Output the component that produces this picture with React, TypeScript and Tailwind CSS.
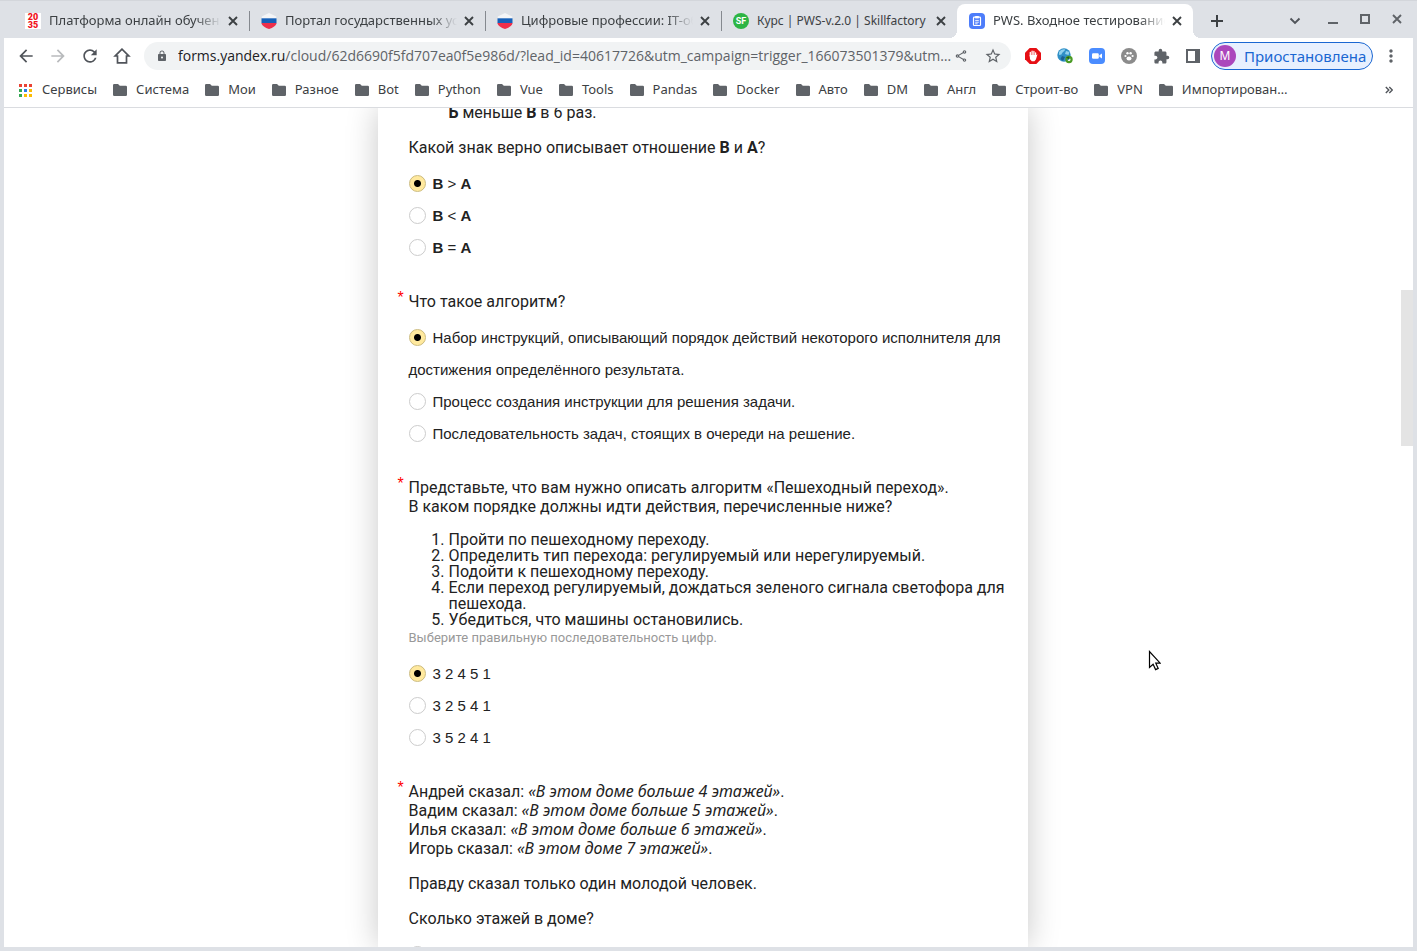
import React from "react";
import {
  MdArrowBack,
  MdArrowForward,
  MdExtension,
  MdLock,
  MdMoreVert,
  MdOutlineShare,
  MdRefresh,
  MdStarBorder,
} from "react-icons/md";

const RussiaIcon = () => (
  <svg viewBox="0 0 16 16" className="size-4">
    <path d="M8 0 15.2 3.6V6H.8V3.6z" fill="#f4f5f7" />
    <path d="M.5 5.3h15v5H.5z" fill="#1660b8" />
    <path d="M.5 10h15c-.4 3-3.500 4.600-7.500 6C4 14.600.9 13 .5 10z" fill="#ee2f4b" />
  </svg>
);

const U2035Icon = () => (
  <span className="flex size-4 flex-col items-center justify-center bg-white font-[Roboto,sans-serif] text-[9px] leading-[8px] font-black text-[#f01020]">
    <span>20</span>
    <span>35</span>
  </span>
);

const SkillfactoryIcon = () => (
  <span className="flex size-4 items-center justify-center rounded-full bg-[#2db544] font-[Roboto,sans-serif] text-[9px] leading-none font-bold text-white">
    SF
  </span>
);

const FormsIcon = () => (
  <svg viewBox="0 0 16 16" className="size-4">
    <rect width="16" height="16" rx="4" fill="#4d7dfa" />
    <rect x="4.500" y="4.200" width="7" height="8.300" rx=".8" fill="none" stroke="#fff" strokeWidth="1.200" />
    <path d="M6.200 3h3.600v2.400H6.200z" fill="#fff" />
    <path d="M6.200 7.400h3.600M6.200 9.200h3.600M6.200 10.800h2.400" stroke="#fff" strokeWidth=".9" />
  </svg>
);

interface Tab {
  title: string;
  icon: React.ReactNode;
  active?: boolean;
  compact?: boolean;
}

const tabs: Tab[] = [
  { title: "Платформа онлайн обучения", icon: <U2035Icon /> },
  { title: "Портал государственных услуг", icon: <RussiaIcon /> },
  { title: "Цифровые профессии: IT-образование", icon: <RussiaIcon /> },
  { title: "Курс | PWS-v.2.0 | Skillfactory", icon: <SkillfactoryIcon />, compact: true },
  { title: "PWS. Входное тестирование", icon: <FormsIcon />, active: true },
];

function BrowserTab({ title, icon, active, compact }: Tab) {
  return (
    <div
      className={`relative flex h-[34px] min-w-0 basis-[236px] items-center pr-2 pl-3 ${
        active ? "rounded-t-lg bg-white" : ""
      }`}
    >
      {active && (
        <>
          <span className="absolute bottom-0 -left-2 size-2 bg-[radial-gradient(circle_at_0_0,transparent_8px,#fff_8px)]" />
          <span className="absolute -right-2 bottom-0 size-2 bg-[radial-gradient(circle_at_100%_0,transparent_8px,#fff_8px)]" />
        </>
      )}
      <span className="shrink-0">{icon}</span>
      <span
        className={`ml-2 min-w-0 flex-1 overflow-hidden whitespace-nowrap ${
          compact ? "text-xs" : "mask-r-from-85% text-[13px]"
        }`}
      >
        {title}
      </span>
      <button aria-label="Закрыть вкладку" className="ml-1 flex size-4 shrink-0 items-center justify-center">
        <svg viewBox="0 0 10 10" className="size-[10px]">
          <path d="M1 1l8 8M9 1l-8 8" stroke="#3c4043" strokeWidth="1.900" />
        </svg>
      </button>
    </div>
  );
}

function TabStrip() {
  return (
    <div className="flex h-[38px] items-end pl-[9px]">
      {tabs.map((tab, i) => (
        <React.Fragment key={tab.title}>
          {i > 0 && i < 4 && <span className="-mr-px mb-[7px] h-5 w-px shrink-0 bg-[#85898f]" />}
          <BrowserTab {...tab} />
        </React.Fragment>
      ))}
      <button aria-label="Новая вкладка" className="ml-[10px] flex h-[34px] w-7 items-center justify-center">
        <svg viewBox="0 0 12 12" className="size-3">
          <path d="M6 0v12M0 6h12" stroke="#3c4043" strokeWidth="2" />
        </svg>
      </button>
      <div className="ml-auto flex h-[38px] items-center">
        <button aria-label="Поиск вкладок" className="flex w-11 items-center justify-center pt-1">
          <svg viewBox="0 0 12 8" className="h-2 w-3">
            <path d="M1.500 1.500 6 6l4.500-4.500" fill="none" stroke="#50545a" strokeWidth="1.900" />
          </svg>
        </button>
        <button aria-label="Свернуть" className="flex w-8 items-center justify-center">
          <svg viewBox="0 0 10 10" className="size-[10px]">
            <path d="M0 9h10" stroke="#5f6368" strokeWidth="2" />
          </svg>
        </button>
        <button aria-label="Развернуть" className="flex w-8 items-center justify-center">
          <svg viewBox="0 0 10 10" className="size-[10px]">
            <rect x="1" y="1" width="8" height="8" fill="none" stroke="#5f6368" strokeWidth="2" />
          </svg>
        </button>
        <button aria-label="Закрыть" className="flex w-8 items-center justify-center">
          <svg viewBox="0 0 10 10" className="size-[10px]">
            <path d="M1 1l8 8M9 1l-8 8" stroke="#5f6368" strokeWidth="1.900" />
          </svg>
        </button>
      </div>
    </div>
  );
}

const navButton = "flex size-8 shrink-0 items-center justify-center text-[#50545a]";

function Toolbar() {
  return (
    <div className="flex h-9 items-center bg-white pr-1 pl-[6px]">
      <button aria-label="Назад" className={navButton}>
        <MdArrowBack className="size-5" />
      </button>
      <button aria-label="Вперёд" className={`${navButton} opacity-40`}>
        <MdArrowForward className="size-5" />
      </button>
      <button aria-label="Обновить" className={navButton}>
        <MdRefresh className="size-5" />
      </button>
      <button aria-label="Домашняя страница" className={navButton}>
        <svg viewBox="0 0 18 18" className="size-[18px]">
          <path
            d="M9 2.200 2.200 9H4.500v6.800h9V9h2.300z"
            fill="none"
            stroke="currentColor"
            strokeWidth="1.700"
          />
        </svg>
      </button>
      <div className="mr-[6px] ml-[6px] flex h-7 min-w-0 flex-1 items-center rounded-full bg-[#f1f3f4] pr-[9px] pl-3">
        <MdLock className="size-3 shrink-0 text-[#5f6368]" />
        <div
          role="textbox"
          aria-label="Адресная строка"
          className="ml-[10px] min-w-0 flex-1 overflow-hidden font-['Open_Sans',sans-serif] text-sm whitespace-nowrap text-[#5f6368]"
        >
          <span className="text-[#202124]">forms.yandex.ru</span>
          /cloud/62d6690f5fd707ea0f5e986d/?lead_id=40617726&amp;utm_campaign=trigger_166073501379&amp;utm…
        </div>
        <button aria-label="Поделиться" className="ml-[2px] shrink-0">
          <MdOutlineShare className="size-[14px] text-[#5f6368]" />
        </button>
        <button aria-label="Добавить в закладки" className="ml-4 shrink-0">
          <MdStarBorder className="size-[18px] text-[#5f6368]" />
        </button>
      </div>
      <button aria-label="AdBlock" className={navButton}>
        <svg viewBox="0 0 16 16" className="size-4">
          <path d="M4.700 0h6.600L16 4.700v6.600L11.300 16H4.700L0 11.300V4.700z" fill="#e60f14" />
          <path
            d="M5.300 8V4.500M7.100 7.500V3.200M8.900 7.500V3.500M10.600 8V4.900"
            stroke="#fff"
            strokeWidth="1.300"
            strokeLinecap="round"
          />
          <path d="M4.700 7h6.600l1.200-.7-1.600 5.200-1.500 1.700H6.800L5 11.300z" fill="#fff" />
        </svg>
      </button>
      <button aria-label="Переводчик" className={navButton}>
        <svg viewBox="0 0 16 16" className="size-4">
          <circle cx="7" cy="7" r="6.700" fill="#2f8fc6" />
          <path d="M2 4c2-2.500 5-3 6-2.500C8 3.500 5 4 4.500 6.500L2 7zM9 3l3.500 1-1 3L8 6z" fill="#8fd0ee" />
          <path d="M5 8l3 1-2 4-2.500-2z" fill="#1c5f93" />
          <circle cx="12" cy="11.500" r="2.600" fill="none" stroke="#4b9b25" strokeWidth="2.200" />
          <path d="M9 9.500l3-1 .5 3z" fill="#235f14" />
        </svg>
      </button>
      <button aria-label="Zoom" className={navButton}>
        <svg viewBox="0 0 16 16" className="size-4">
          <rect width="16" height="16" rx="4" fill="#4a8cff" />
          <rect x="3" y="5.200" width="6.800" height="5.600" rx="1.200" fill="#fff" />
          <path d="M10.400 7.200 13 5.400v5.200l-2.600-1.800z" fill="#fff" />
        </svg>
      </button>
      <button aria-label="Расширение" className={navButton}>
        <svg viewBox="0 0 16 16" className="size-4">
          <circle cx="8" cy="8" r="8" fill="#8b8b8b" />
          <ellipse cx="8" cy="10.400" rx="2.500" ry="2" fill="#fff" />
          <circle cx="4.500" cy="8" r="1.100" fill="#fff" />
          <circle cx="6.500" cy="5.300" r="1.200" fill="#fff" />
          <circle cx="9.600" cy="5.300" r="1.200" fill="#fff" />
          <circle cx="11.600" cy="8" r="1.100" fill="#fff" />
        </svg>
      </button>
      <button aria-label="Расширения" className={navButton}>
        <MdExtension className="size-[17px] text-[#5f6368]" />
      </button>
      <button aria-label="Боковая панель" className={navButton}>
        <svg viewBox="0 0 14 14" className="size-[14px]">
          <rect x="1" y="1" width="12" height="12" fill="#fff" stroke="#5f6368" strokeWidth="2" />
          <path d="M9 1h4v12H9z" fill="#5f6368" />
        </svg>
      </button>
      <button className="ml-[2px] flex h-7 w-[162px] shrink-0 items-center gap-2 rounded-full border border-[#1a67d2] bg-[#e8f0fe] pl-[2px] text-[15px] text-[#1a67d2]">
        <span className="flex size-[22px] items-center justify-center rounded-full bg-[#ab47bc] text-xs text-white">
          M
        </span>
        Приостановлена
      </button>
      <button aria-label="Меню" className="flex h-8 w-9 shrink-0 items-center justify-center">
        <MdMoreVert className="size-5 text-[#5f6368]" />
      </button>
    </div>
  );
}

const bookmarks = [
  "Система", "Мои", "Разное", "Bot", "Python", "Vue", "Tools", "Pandas",
  "Docker", "Авто", "DM", "Англ", "Строит-во", "VPN", "Импортирован…",
];

const Folder = () => (
  <svg viewBox="0 0 14 12" className="h-3 w-[14px] shrink-0">
    <path d="M0 1.200A1.200 1.200 0 0 1 1.200 0H5l1.800 1.800h6A1.200 1.200 0 0 1 14 3v7.800A1.200 1.200 0 0 1 12.800 12H1.200A1.200 1.200 0 0 1 0 10.800z" fill="#5f6368" />
  </svg>
);

function AppsGrid() {
  return (
    <span className="grid grid-cols-3 gap-[2px]">
      <span className="size-[3px] bg-[#ea4335]" />
      <span className="size-[3px] bg-[#ea4335]" />
      <span className="size-[3px] bg-[#ea4335]" />
      <span className="size-[3px] bg-[#34a853]" />
      <span className="size-[3px] bg-[#2b7de9]" />
      <span className="size-[3px] bg-[#fbbc04]" />
      <span className="size-[3px] bg-[#34a853]" />
      <span className="size-[3px] bg-[#fbbc04]" />
      <span className="size-[3px] bg-[#fbbc04]" />
    </span>
  );
}

function BookmarksBar() {
  return (
    <nav className="flex h-[34px] items-center gap-4 overflow-hidden border-b border-[#dadce0] bg-white pr-5 pb-px pl-[15px] text-[13px] text-[#3c4043]">
      <a href="#apps" className="flex shrink-0 items-center gap-[10px]">
        <AppsGrid />
        Сервисы
      </a>
      {bookmarks.map((name) => (
        <a key={name} href="#folder" className="flex shrink-0 items-center gap-[9px]">
          <Folder />
          {name}
        </a>
      ))}
      <button aria-label="Другие закладки" className="ml-auto">
        <svg viewBox="0 0 8 8" className="size-2">
          <path d="M.8 1l3 3-3 3M4.300 1l3 3-3 3" fill="none" stroke="#50545a" strokeWidth="1.400" />
        </svg>
      </button>
    </nav>
  );
}

interface QuestionProps {
  name: string;
  required?: boolean;
  hint?: string;
  options: React.ReactNode[];
  selected?: number;
  children: React.ReactNode;
}

function Question({ name, required, hint, options, selected, children }: QuestionProps) {
  return (
    <fieldset className="relative mb-7">
      {required && (
        <span className="absolute -top-[2px] -left-[11px] text-base leading-4 text-[#f00]">*</span>
      )}
      <div className="font-[Roboto,'Noto_Sans',sans-serif] text-base leading-[19px]">{children}</div>
      {hint && (
        <p className="font-[Roboto,'Noto_Sans',sans-serif] text-[13px] leading-[19px] text-[#999]">{hint}</p>
      )}
      <div className="mt-[11px]">
        {options.map((option, i) => (
          <label key={i} className="block text-[15px] leading-8">
            <input
              type="radio"
              name={name}
              defaultChecked={i === selected}
              className="mr-[7px] -mt-[3px] inline-block size-[17px] appearance-none rounded-full border border-[#ccc] bg-white align-middle checked:border-[#ccbb7d] checked:bg-[radial-gradient(circle,#000_3px,#ffe99e_4px)]"
            />
            {option}
          </label>
        ))}
      </div>
    </fieldset>
  );
}

const Said = ({ who, children }: { who: string; children: React.ReactNode }) => (
  <span className="block">
    {who} сказал: <i className="font-['Noto_Sans',sans-serif]">{children}</i>.
  </span>
);

function Form() {
  return (
    <form className="w-[650px] bg-white pr-5 pl-[31px] font-['Liberation_Sans',sans-serif] text-[#222] shadow-[0_0_30px_rgba(0,0,0,0.22)]">
      <div className="-mt-[3px]">
        <Question
          name="sign"
          selected={0}
          options={[">", "<", "="].map((sign) => (
            <React.Fragment key={sign}>
              <b>В</b> {sign} <b>А</b>
            </React.Fragment>
          ))}
        >
          <ul className="mb-[17px] pl-10 leading-4">
            <li>
              <b>Б</b> меньше <b>В</b> в 6 раз.
            </li>
          </ul>
          <p>
            Какой знак верно описывает отношение <b>В</b> и <b>А</b>?
          </p>
        </Question>
        <Question
          name="algorithm"
          required
          selected={0}
          options={[
            "Набор инструкций, описывающий порядок действий некоторого исполнителя для достижения определённого результата.",
            "Процесс создания инструкции для решения задачи.",
            "Последовательность задач, стоящих в очереди на решение.",
          ]}
        >
          <p>Что такое алгоритм?</p>
        </Question>
        <Question
          name="crossing"
          required
          selected={0}
          hint="Выберите правильную последовательность цифр."
          options={["3 2 4 5 1", "3 2 5 4 1", "3 5 2 4 1"]}
        >
          <p>
            Представьте, что вам нужно описать алгоритм «Пешеходный переход».
            <br />В каком порядке должны идти действия, перечисленные ниже?
          </p>
          <ol className="mt-4 list-decimal pl-10 leading-4">
            <li>Пройти по пешеходному переходу.</li>
            <li>Определить тип перехода: регулируемый или нерегулируемый.</li>
            <li>Подойти к пешеходному переходу.</li>
            <li>Если переход регулируемый, дождаться зеленого сигнала светофора для пешехода.</li>
            <li>Убедиться, что машины остановились.</li>
          </ol>
        </Question>
        <Question name="floors" required options={["4"]}>
          <div className="flex flex-col gap-4">
            <p>
              <Said who="Андрей">«В этом доме больше 4 этажей»</Said>
              <Said who="Вадим">«В этом доме больше 5 этажей»</Said>
              <Said who="Илья">«В этом доме больше 6 этажей»</Said>
              <Said who="Игорь">«В этом доме 7 этажей»</Said>
            </p>
            <p>Правду сказал только один молодой человек.</p>
            <p>Сколько этажей в доме?</p>
          </div>
        </Question>
      </div>
    </form>
  );
}

export default function App() {
  return (
    <div className="relative flex h-screen flex-col overflow-hidden bg-[#dee1e6] px-1 pb-1 font-['Noto_Sans',sans-serif] text-[#3c4043] shadow-[inset_0_1px_0_#d3d6db]">
      <TabStrip />
      <Toolbar />
      <BookmarksBar />
      <main className="flex min-h-0 flex-1 overflow-hidden bg-white">
        <div className="flex min-w-0 flex-1 justify-center">
          <Form />
        </div>
        <div className="w-3 shrink-0 pt-[182px]">
          <div className="h-[156px] bg-[#e4e4e4]" />
        </div>
      </main>
      <svg viewBox="0 0 13 21" className="pointer-events-none absolute top-[650px] left-[1148px] h-[21px] w-[13px]">
        <path
          d="M1.500 1.500v16l3.600-3.300 2.500 5.400 2.600-1.200-2.400-5.200h4.400z"
          fill="#fff"
          stroke="#000"
          strokeWidth="1.200"
        />
      </svg>
    </div>
  );
}
